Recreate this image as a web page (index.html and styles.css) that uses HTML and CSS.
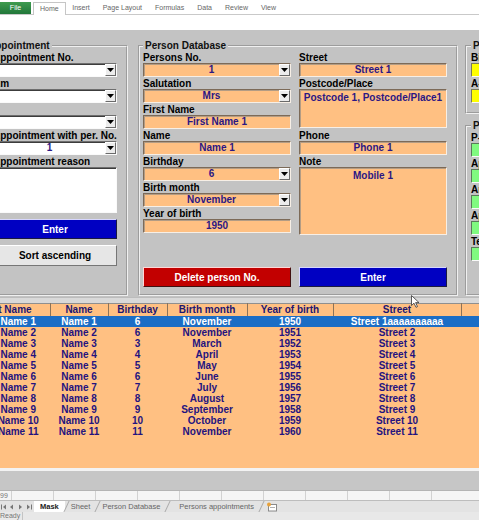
FILE: index.html
```html
<!DOCTYPE html>
<html>
    <head>
        <meta charset="UTF-8" />
        <title>Person Database - Mask</title>
        <link rel="stylesheet" href="styles.css">
    </head>
    <body>
        <!-- Ribbon tabs -->
        <div class="ribbon">
            <div class="ribbon-tabs">
                <span class="tab tab-file">File</span>
                <span class="tab tab-active">Home</span>
                <span class="tab">Insert</span>
                <span class="tab">Page Layout</span>
                <span class="tab">Formulas</span>
                <span class="tab">Data</span>
                <span class="tab">Review</span>
                <span class="tab">View</span>
            </div>
        </div>

        <!-- The input mask -->
        <div class="form">
            <fieldset class="group group-appt">
                <legend>Appointment</legend>
                <div class="label">Appointment No.</div>
                <div class="field white"><span class="value"></span><span class="drop"><svg width="7" height="4" viewBox="0 0 7 4"><polygon points="0,0 7,0 3.5,4" fill="#000"/></svg></span></div>
                <div class="label">Am</div>
                <div class="field white"><span class="value"></span><span class="drop"><svg width="7" height="4" viewBox="0 0 7 4"><polygon points="0,0 7,0 3.5,4" fill="#000"/></svg></span></div>
                <div class="label"></div>
                <div class="field white"><span class="value"></span><span class="drop"><svg width="7" height="4" viewBox="0 0 7 4"><polygon points="0,0 7,0 3.5,4" fill="#000"/></svg></span></div>
                <div class="label">Appointment with per. No.</div>
                <div class="field white"><span class="value">1</span><span class="drop"><svg width="7" height="4" viewBox="0 0 7 4"><polygon points="0,0 7,0 3.5,4" fill="#000"/></svg></span></div>
                <div class="label">Appointment reason</div>
                <div class="field white area-reason"></div>
                <button class="btn btn-blue btn-enter">Enter</button>
                <button class="btn btn-gray btn-sort">Sort ascending</button>
            </fieldset>

            <fieldset class="group group-person">
                <legend>Person Database</legend>
                <div class="cols">
                    <div class="col">
                        <div class="label">Persons No.</div>
                        <div class="field"><span class="value">1</span><span class="drop"><svg width="7" height="4" viewBox="0 0 7 4"><polygon points="0,0 7,0 3.5,4" fill="#000"/></svg></span></div>
                        <div class="label">Salutation</div>
                        <div class="field"><span class="value">Mrs</span><span class="drop"><svg width="7" height="4" viewBox="0 0 7 4"><polygon points="0,0 7,0 3.5,4" fill="#000"/></svg></span></div>
                        <div class="label">First Name</div>
                        <div class="field"><span class="value">First Name 1</span></div>
                        <div class="label">Name</div>
                        <div class="field"><span class="value">Name 1</span></div>
                        <div class="label">Birthday</div>
                        <div class="field"><span class="value">6</span><span class="drop"><svg width="7" height="4" viewBox="0 0 7 4"><polygon points="0,0 7,0 3.5,4" fill="#000"/></svg></span></div>
                        <div class="label">Birth month</div>
                        <div class="field"><span class="value">November</span><span class="drop"><svg width="7" height="4" viewBox="0 0 7 4"><polygon points="0,0 7,0 3.5,4" fill="#000"/></svg></span></div>
                        <div class="label">Year of birth</div>
                        <div class="field"><span class="value">1950</span></div>
                    </div>
                    <div class="col">
                        <div class="label">Street</div>
                        <div class="field"><span class="value">Street 1</span></div>
                        <div class="label">Postcode/Place</div>
                        <div class="field area area-postcode"><span class="value">Postcode 1, Postcode/Place1</span></div>
                        <div class="label">Phone</div>
                        <div class="field"><span class="value">Phone 1</span></div>
                        <div class="label">Note</div>
                        <div class="field area area-note"><span class="value">Mobile 1</span></div>
                    </div>
                </div>
                <div class="buttons">
                    <button class="btn btn-red">Delete person No.</button>
                    <button class="btn btn-blue">Enter</button>
                </div>
            </fieldset>

            <div class="side">
                <fieldset class="group group-search">
                    <legend>Persons search</legend>
                    <div class="label">Birthday</div>
                    <div class="field yellow"></div>
                    <div class="label">A-Z</div>
                    <div class="field yellow"></div>
                </fieldset>
                <fieldset class="group group-appts">
                    <legend>Persons appointments</legend>
                    <div class="label">P-No.</div>
                    <div class="field green"></div>
                    <div class="label">Appointment No.</div>
                    <div class="field green"></div>
                    <div class="label">Am</div>
                    <div class="field green"></div>
                    <div class="label">Appointment reason</div>
                    <div class="field green"></div>
                    <div class="label">Telephone</div>
                    <div class="field green"></div>
                </fieldset>
            </div>
        </div>
        <div class="form-bottom"></div>

        <!-- List of persons -->
        <div class="list-box">
            <table class="list">
                <colgroup>
                    <col class="c-first">
                    <col class="c-name">
                    <col class="c-day">
                    <col class="c-month">
                    <col class="c-year">
                    <col class="c-street">
                    <col class="c-rest">
                </colgroup>
                <thead>
                    <tr><th>First Name</th><th>Name</th><th>Birthday</th><th>Birth month</th><th>Year of birth</th><th>Street</th><th></th></tr>
                </thead>
                <tbody>
                    <tr class="selected"><td>First Name 1</td><td>Name 1</td><td>6</td><td>November</td><td>1950</td><td>Street 1aaaaaaaaaa</td><td></td></tr>
                    <tr><td>First Name 2</td><td>Name 2</td><td>6</td><td>November</td><td>1951</td><td>Street 2</td><td></td></tr>
                    <tr><td>First Name 3</td><td>Name 3</td><td>3</td><td>March</td><td>1952</td><td>Street 3</td><td></td></tr>
                    <tr><td>First Name 4</td><td>Name 4</td><td>4</td><td>April</td><td>1953</td><td>Street 4</td><td></td></tr>
                    <tr><td>First Name 5</td><td>Name 5</td><td>5</td><td>May</td><td>1954</td><td>Street 5</td><td></td></tr>
                    <tr><td>First Name 6</td><td>Name 6</td><td>6</td><td>June</td><td>1955</td><td>Street 6</td><td></td></tr>
                    <tr><td>First Name 7</td><td>Name 7</td><td>7</td><td>July</td><td>1956</td><td>Street 7</td><td></td></tr>
                    <tr><td>First Name 8</td><td>Name 8</td><td>8</td><td>August</td><td>1957</td><td>Street 8</td><td></td></tr>
                    <tr><td>First Name 9</td><td>Name 9</td><td>9</td><td>September</td><td>1958</td><td>Street 9</td><td></td></tr>
                    <tr><td>First Name 10</td><td>Name 10</td><td>10</td><td>October</td><td>1959</td><td>Street 10</td><td></td></tr>
                    <tr><td>First Name 11</td><td>Name 11</td><td>11</td><td>November</td><td>1960</td><td>Street 11</td><td></td></tr>
                </tbody>
            </table>
        </div>

        <div class="pane-gap"></div>
        <div class="pane-gray"></div>

        <!-- Worksheet row, sheet tabs and status bar -->
        <div class="grid-row">
            <span class="rowhead">99</span>
            <span class="cell"></span><span class="cell"></span><span class="cell"></span><span class="cell"></span>
            <span class="cell"></span><span class="cell"></span><span class="cell"></span><span class="cell"></span>
            <span class="cell"></span><span class="cell"></span><span class="cell"></span>
        </div>
        <div class="sheet-tabs">
            <span class="nav">
                <svg width="34" height="8" viewBox="0 0 34 8">
                    <rect x="1" y="1.5" width="1" height="5" fill="#777"/>
                    <polygon points="6,1.5 6,6.5 3,4" fill="#777"/>
                    <polygon points="13,1.5 13,6.5 10,4" fill="#777"/>
                    <polygon points="19,1.5 19,6.5 22,4" fill="#777"/>
                    <polygon points="27,1.5 27,6.5 30,4" fill="#777"/>
                    <rect x="31" y="1.5" width="1" height="5" fill="#777"/>
                </svg>
            </span>
            <span class="sheet-tab sheet-tab-active">Mask</span>
            <span class="sheet-tab">Sheet</span>
            <span class="sheet-tab">Person Database</span>
            <span class="sheet-tab sheet-tab-wide">Persons appointments</span>
            <span class="new-sheet">
                <svg width="12" height="10" viewBox="0 0 12 10">
                    <rect x="2.5" y="2.5" width="8" height="6.5" fill="#fff" stroke="#8a8a8a"/>
                    <rect x="4" y="5" width="5" height="1" fill="#b0b0b0"/>
                    <circle cx="3" cy="2.5" r="2" fill="#e8a23a"/>
                </svg>
            </span>
        </div>
        <div class="status"><span class="status-text">Ready</span></div>

        <!-- Mouse pointer -->
        <svg class="pointer" width="9" height="13" viewBox="0 0 9 13">
            <polygon points="0.5,0.5 0.5,10.5 3,8.2 5,12.3 6.5,11.6 4.6,7.6 8,7.6" fill="#fff" stroke="#333" stroke-width="0.8"/>
        </svg>
    </body>
</html>
```

FILE: styles.css
```css
* {
    box-sizing: border-box;
}

body {
    margin: 0;
    width: 479px;
    height: 520px;
    overflow: hidden;
    position: relative;
    font-family: "Liberation Sans", Arial, sans-serif;
    background-color: #fff;
}

/* Ribbon */
.ribbon {
    height: 30px;
    background-color: #fff;
}

.ribbon-tabs {
    display: flex;
    height: 15px;
    padding-top: 2px;
    border-bottom: 1px solid #c9c9c9;
    font-size: 7px;
    color: #666;
}

.tab {
    padding: 0 6.5px;
    line-height: 12px;
    white-space: nowrap;
}

.tab-file {
    width: 31px;
    padding: 0;
    margin-right: 2px;
    text-align: center;
    color: #fff;
    background: linear-gradient(#3f9b4e, #21773a);
}

.tab-active {
    height: 13px;
    padding: 0 6px;
    border: 1px solid #c6c6c6;
    border-bottom: none;
    background-color: #fff;
}

/* Mask */
.form {
    display: flex;
    height: 267px;
    padding: 10px 0 1px;
    background-color: #c3c3c3;
}

.group {
    display: flex;
    flex-direction: column;
    flex: none;
    min-width: 0;
    margin: 0;
    padding: 0 9px 7px 3px;
    border: 2px groove #f0f0f0;
}

.group legend {
    padding: 0 2px;
    font-size: 10px;
    font-weight: bold;
    line-height: 12px;
    color: #111;
    white-space: nowrap;
}

.group-appt {
    width: 142px;
    margin-left: -14px;
    padding-left: 5px;
}

.group-appt legend {
    margin-left: -7px;
}

.group-person {
    width: 320px;
    margin-left: 10px;
}

.side {
    display: flex;
    flex-direction: column;
    flex: none;
    width: 60px;
    margin-left: 7px;
}

.side .group {
    padding: 0 0 8px 4px;
    border-right: none;
}

.group-appts {
    flex: 1;
    margin-top: 6px;
}

.label {
    height: 11px;
    font-size: 10px;
    font-weight: bold;
    line-height: 11px;
    color: #000;
    white-space: nowrap;
}

.field {
    display: flex;
    align-items: center;
    height: 14px;
    margin-bottom: 1px;
    border: 1px solid;
    border-color: #7c6a58 #f7efe6 #f7efe6 #7c6a58;
    box-shadow: inset 1px 1px 0 #b39c84;
    background-color: #ffc082;
    font-size: 10px;
    font-weight: bold;
    line-height: 12px;
    color: #2b1784;
}

.field .value {
    flex: 1;
    text-align: center;
    white-space: nowrap;
    overflow: hidden;
}

.field.white {
    background-color: #fff;
    border-color: #6e6e6e #fafafa #fafafa #6e6e6e;
    box-shadow: inset 1px 1px 0 #3c3c3c;
}

.field.yellow {
    background-color: #ffff00;
    border-color: #7a7a5a #fafafa #fafafa #7a7a5a;
    box-shadow: none;
}

.field.green {
    background-color: #80fa80;
    border-color: #5a7a5a #fafafa #fafafa #5a7a5a;
    box-shadow: none;
}

.drop {
    display: flex;
    align-items: center;
    justify-content: center;
    flex: none;
    width: 11px;
    height: 12px;
    border: 1px solid;
    border-color: #fff #6a6a6a #6a6a6a #fff;
    background-color: #ececec;
}

.area {
    align-items: flex-start;
    padding-top: 2px;
}

.area-postcode {
    height: 39px;
    margin-bottom: 2px;
}

.area-note {
    height: 68px;
}

.area-reason {
    height: 46px;
    margin-bottom: 0;
}

.cols {
    display: flex;
    gap: 8px;
}

.col {
    width: 148px;
}

.buttons {
    display: flex;
    gap: 8px;
    margin-top: auto;
}

.btn {
    display: block;
    width: 100%;
    height: 20px;
    padding: 0;
    border: 1px solid;
    font-family: "Liberation Sans", Arial, sans-serif;
    font-size: 10px;
    font-weight: bold;
    cursor: pointer;
}

.buttons .btn {
    width: 148px;
}

.btn-blue {
    background-color: #0000c2;
    color: #fff;
    border-color: #d6d6ff #1a1a40 #1a1a40 #d6d6ff;
}

.btn-red {
    background-color: #c20000;
    color: #fff;
    border-color: #ffd6d6 #401010 #401010 #ffd6d6;
}

.btn-gray {
    height: 21px;
    background-color: #e6e6e6;
    color: #000;
    border-color: #fff #767676 #767676 #fff;
}

.btn-enter {
    margin-top: 6px;
}

.btn-sort {
    margin-top: 6px;
}

.form-bottom {
    height: 6px;
    background-color: #d9d9d9;
    border-top: 1px solid #bcbcbc;
}

/* List */
.list-box {
    height: 165px;
    overflow: hidden;
    background-color: #ffc082;
}

.list {
    width: 559px;
    margin-left: -38px;
    border-collapse: collapse;
    table-layout: fixed;
}

.c-first { width: 88px; }
.c-name { width: 58px; }
.c-day { width: 59px; }
.c-month { width: 80px; }
.c-year { width: 86px; }
.c-street { width: 128px; }
.c-rest { width: 60px; }

.list th {
    height: 12px;
    padding: 0;
    border-top: 1px solid #8f8f8f;
    border-right: 1px solid #8c735a;
    font-size: 10px;
    font-weight: bold;
    line-height: 11px;
    color: #1d1670;
    text-align: center;
    white-space: nowrap;
    overflow: hidden;
}

.list td {
    height: 11px;
    padding: 0;
    font-size: 10px;
    font-weight: bold;
    line-height: 11px;
    color: #24137f;
    text-align: center;
    white-space: nowrap;
    overflow: hidden;
}

.list tr.selected td {
    background-color: #1b6dc5;
    color: #fff;
}

.pane-gap {
    height: 3px;
    background-color: #f3f3f3;
}

.pane-gray {
    height: 19px;
    background-color: #c6c6c6;
}

/* Sheet area */
.grid-row {
    display: flex;
    height: 10px;
    border-top: 1px solid #b4b4b4;
    background-color: #f5f5f5;
    font-size: 7px;
    line-height: 9px;
    color: #777;
}

.rowhead {
    width: 11px;
    flex: none;
}

.cell {
    width: 42px;
    flex: none;
    border-left: 1px solid #d2d2d2;
}

.sheet-tabs {
    display: flex;
    height: 12px;
    border-top: 1px solid #bdbdbd;
    background-color: #e3e3e3;
    font-size: 7.5px;
    line-height: 11px;
    color: #666;
}

.nav {
    display: flex;
    align-items: center;
    width: 34px;
    flex: none;
}

.sheet-tab {
    position: relative;
    padding: 0 6px;
    white-space: nowrap;
}

.sheet-tab::after {
    content: "";
    position: absolute;
    right: -2px;
    top: 0;
    bottom: 0;
    width: 1px;
    background-color: #a9a9a9;
    transform: skewX(-25deg);
}

.sheet-tab-active {
    background-color: #fff;
    font-weight: bold;
    color: #222;
}

.sheet-tab-wide {
    padding-left: 13px;
}

.new-sheet {
    display: flex;
    align-items: center;
    margin-left: 6px;
}

.status {
    height: 8px;
    background-color: #e8e8e8;
    font-size: 7px;
    line-height: 8px;
    color: #777;
}

.status-text {
    display: inline-block;
    padding-right: 2px;
    border-right: 1px solid #c4c4c4;
}

.pointer {
    position: absolute;
    left: 411px;
    top: 295px;
}
```
